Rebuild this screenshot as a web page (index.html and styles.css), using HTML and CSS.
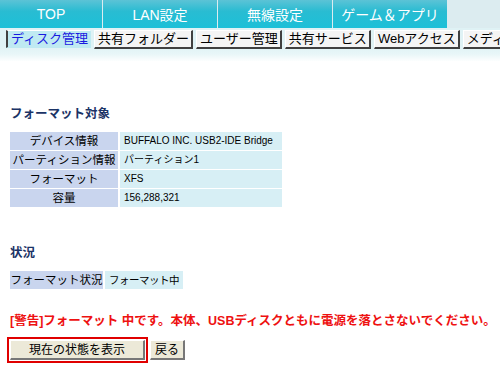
FILE: index.html
```html
<!DOCTYPE html>
<html lang="ja">
<head>
  <meta charset="UTF-8" />
  <title>ディスク管理</title>
  <link rel="stylesheet" href="styles.css">
</head>
<body>

  <div class="nav">
    <div class="tab tab-first">TOP</div>
    <div class="tab">LAN設定</div>
    <div class="tab">無線設定</div>
    <div class="tab">ゲーム＆アプリ</div>
  </div>

  <div class="subnav">
    <span class="sub active">ディスク管理</span>
    <span class="sub">共有フォルダー</span>
    <span class="sub">ユーザー管理</span>
    <span class="sub">共有サービス</span>
    <span class="sub">Webアクセス</span>
    <span class="sub">メディアサーバー</span>
  </div>

  <div class="content">
    <h3>フォーマット対象</h3>
    <table class="info">
      <tr><th>デバイス情報</th><td>BUFFALO INC. USB2-IDE Bridge</td></tr>
      <tr><th>パーティション情報</th><td>パーティション1</td></tr>
      <tr><th>フォーマット</th><td>XFS</td></tr>
      <tr><th>容量</th><td>156,288,321</td></tr>
    </table>

    <h3 class="status-title">状況</h3>
    <table class="status">
      <tr><th>フォーマット状況</th><td>フォーマット中</td></tr>
    </table>

    <p class="warning">[警告]フォーマット 中です。本体、USBディスクともに電源を落とさないでください。</p>

    <div class="buttons">
      <span class="focus"><button class="btn btn-wide">現在の状態を表示</button></span>
      <button class="btn">戻る</button>
    </div>
  </div>

</body>
</html>
```

FILE: styles.css
```css
body {
  margin: 0;
  font-family: "Liberation Sans", "Noto Sans CJK JP", sans-serif;
  font-size: 12px;
  color: #000;
  background: #fff;
}
.nav {
  display: flex;
  height: 28px;
  background: #dcecf0;
}
.tab {
  width: 114px;
  margin-right: 1px;
  display: flex;
  align-items: center;
  justify-content: center;
  color: #fff;
  font-size: 14px;
  background: linear-gradient(#5cc3d6, #29bcd2 40%, #1cc0d8);
}
.tab-first {
  width: 102px;
}
.subnav {
  display: flex;
  gap: 3px;
  padding: 2px 0 0 6px;
  height: 33px;
  box-sizing: border-box;
  white-space: nowrap;
  overflow: hidden;
  background: linear-gradient(#dff2f5 0, #dff2f5 18px, #e8f6f8 26px, #fff 34px);
}
.sub {
  display: inline-block;
  height: 16px;
  line-height: 16px;
  padding: 0 2px 0 3px;
  font-size: 13px;
  background: #f4f4f4;
  border-top: 1px solid #fff;
  border-left: 1px solid #fff;
  border-right: 2px solid #404040;
  border-bottom: 2px solid #404040;
}
.sub.active {
  color: #1a1ae0;
  background: #bfeaf2;
  border-left: 2px solid #404040;
  border-right: 1px solid #bfeaf2;
  border-bottom: 1px solid #bfeaf2;
}
.content {
  padding: 44px 10px 0 10px;
}
h3 {
  margin: 0 0 8px;
  font-size: 12.5px;
  line-height: 18px;
  font-weight: bold;
  color: #1b3366;
}
table {
  border-collapse: separate;
  border-spacing: 0 1px;
}
th {
  background: #c9d5ee;
  font-weight: normal;
  font-size: 11.5px;
  line-height: 16px;
  height: 18px;
  padding: 0;
  text-align: center;
  white-space: nowrap;
}
td {
  background: #d7eff5;
  font-size: 10px;
  line-height: 16px;
  height: 18px;
  padding: 0 4px;
  border-left: 2px solid #fff;
  white-space: nowrap;
}
.info th {
  width: 108px;
}
.info td {
  width: 154px;
}
.status-title {
  margin-top: 36px;
}
.status th {
  width: 93px;
}
.status td {
  width: 67px;
  font-size: 10.5px;
  letter-spacing: -0.5px;
}
.warning {
  margin: 22px 0 7px;
  color: #ee1111;
  font-size: 12.5px;
  line-height: 18px;
  font-weight: bold;
  white-space: nowrap;
}
.buttons {
  display: flex;
  align-items: center;
  gap: 2px;
  margin-left: -3px;
}
.focus {
  display: inline-block;
  border: 2px solid #e00000;
  padding: 1px;
}
.btn {
  font-family: inherit;
  font-size: 12px;
  line-height: 16px;
  height: 20px;
  padding: 0 4px;
  background: #ece9d8;
  border-top: 1px solid #fff;
  border-left: 1px solid #fff;
  border-right: 2px solid #777;
  border-bottom: 2px solid #777;
  display: block;
}
.btn-wide {
  width: 135px;
}
```
